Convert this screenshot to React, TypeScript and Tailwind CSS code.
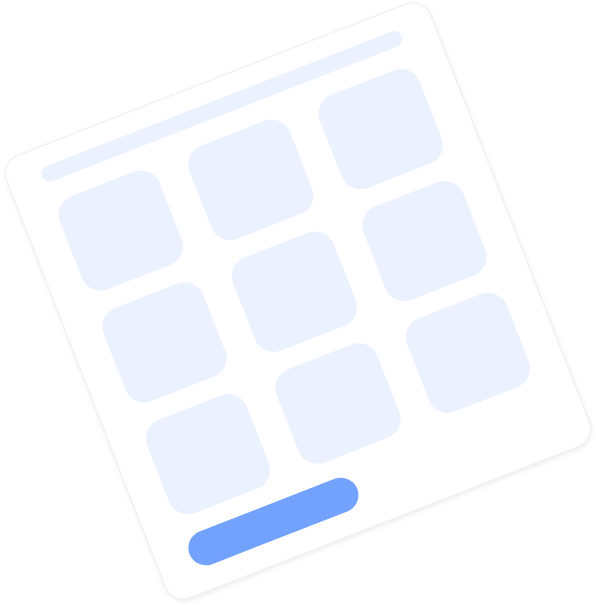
// App.tsx
const tiles = Array.from({ length: 9 });

export default function App() {
  return (
    <div className="w-[596px] h-[605px] flex items-center justify-center bg-white overflow-hidden">
      {/* tilted card */}
      <div className="w-[456px] h-[476px] shrink-0 -translate-y-[2px] rotate-[-21.3deg] rounded-[20px] bg-white border border-[#eeeef0] shadow-[0_2px_5px_rgba(0,0,0,0.07)] pt-[20px] px-[34px] pb-[23px] flex flex-col">
        <div className="h-4 rounded-full bg-[#ebf1fe]" />

        <div className="mt-[21px] grid grid-cols-3 gap-x-[32px] gap-y-[20px]">
          {tiles.map((_, i) => (
            <div key={i} className="h-[100px] rounded-[20px] bg-[#ebf1fe]" />
          ))}
        </div>

        <div className="mt-[19px] w-[180px] h-9 rounded-full bg-[#72a2fe]" />
      </div>
    </div>
  );
}
